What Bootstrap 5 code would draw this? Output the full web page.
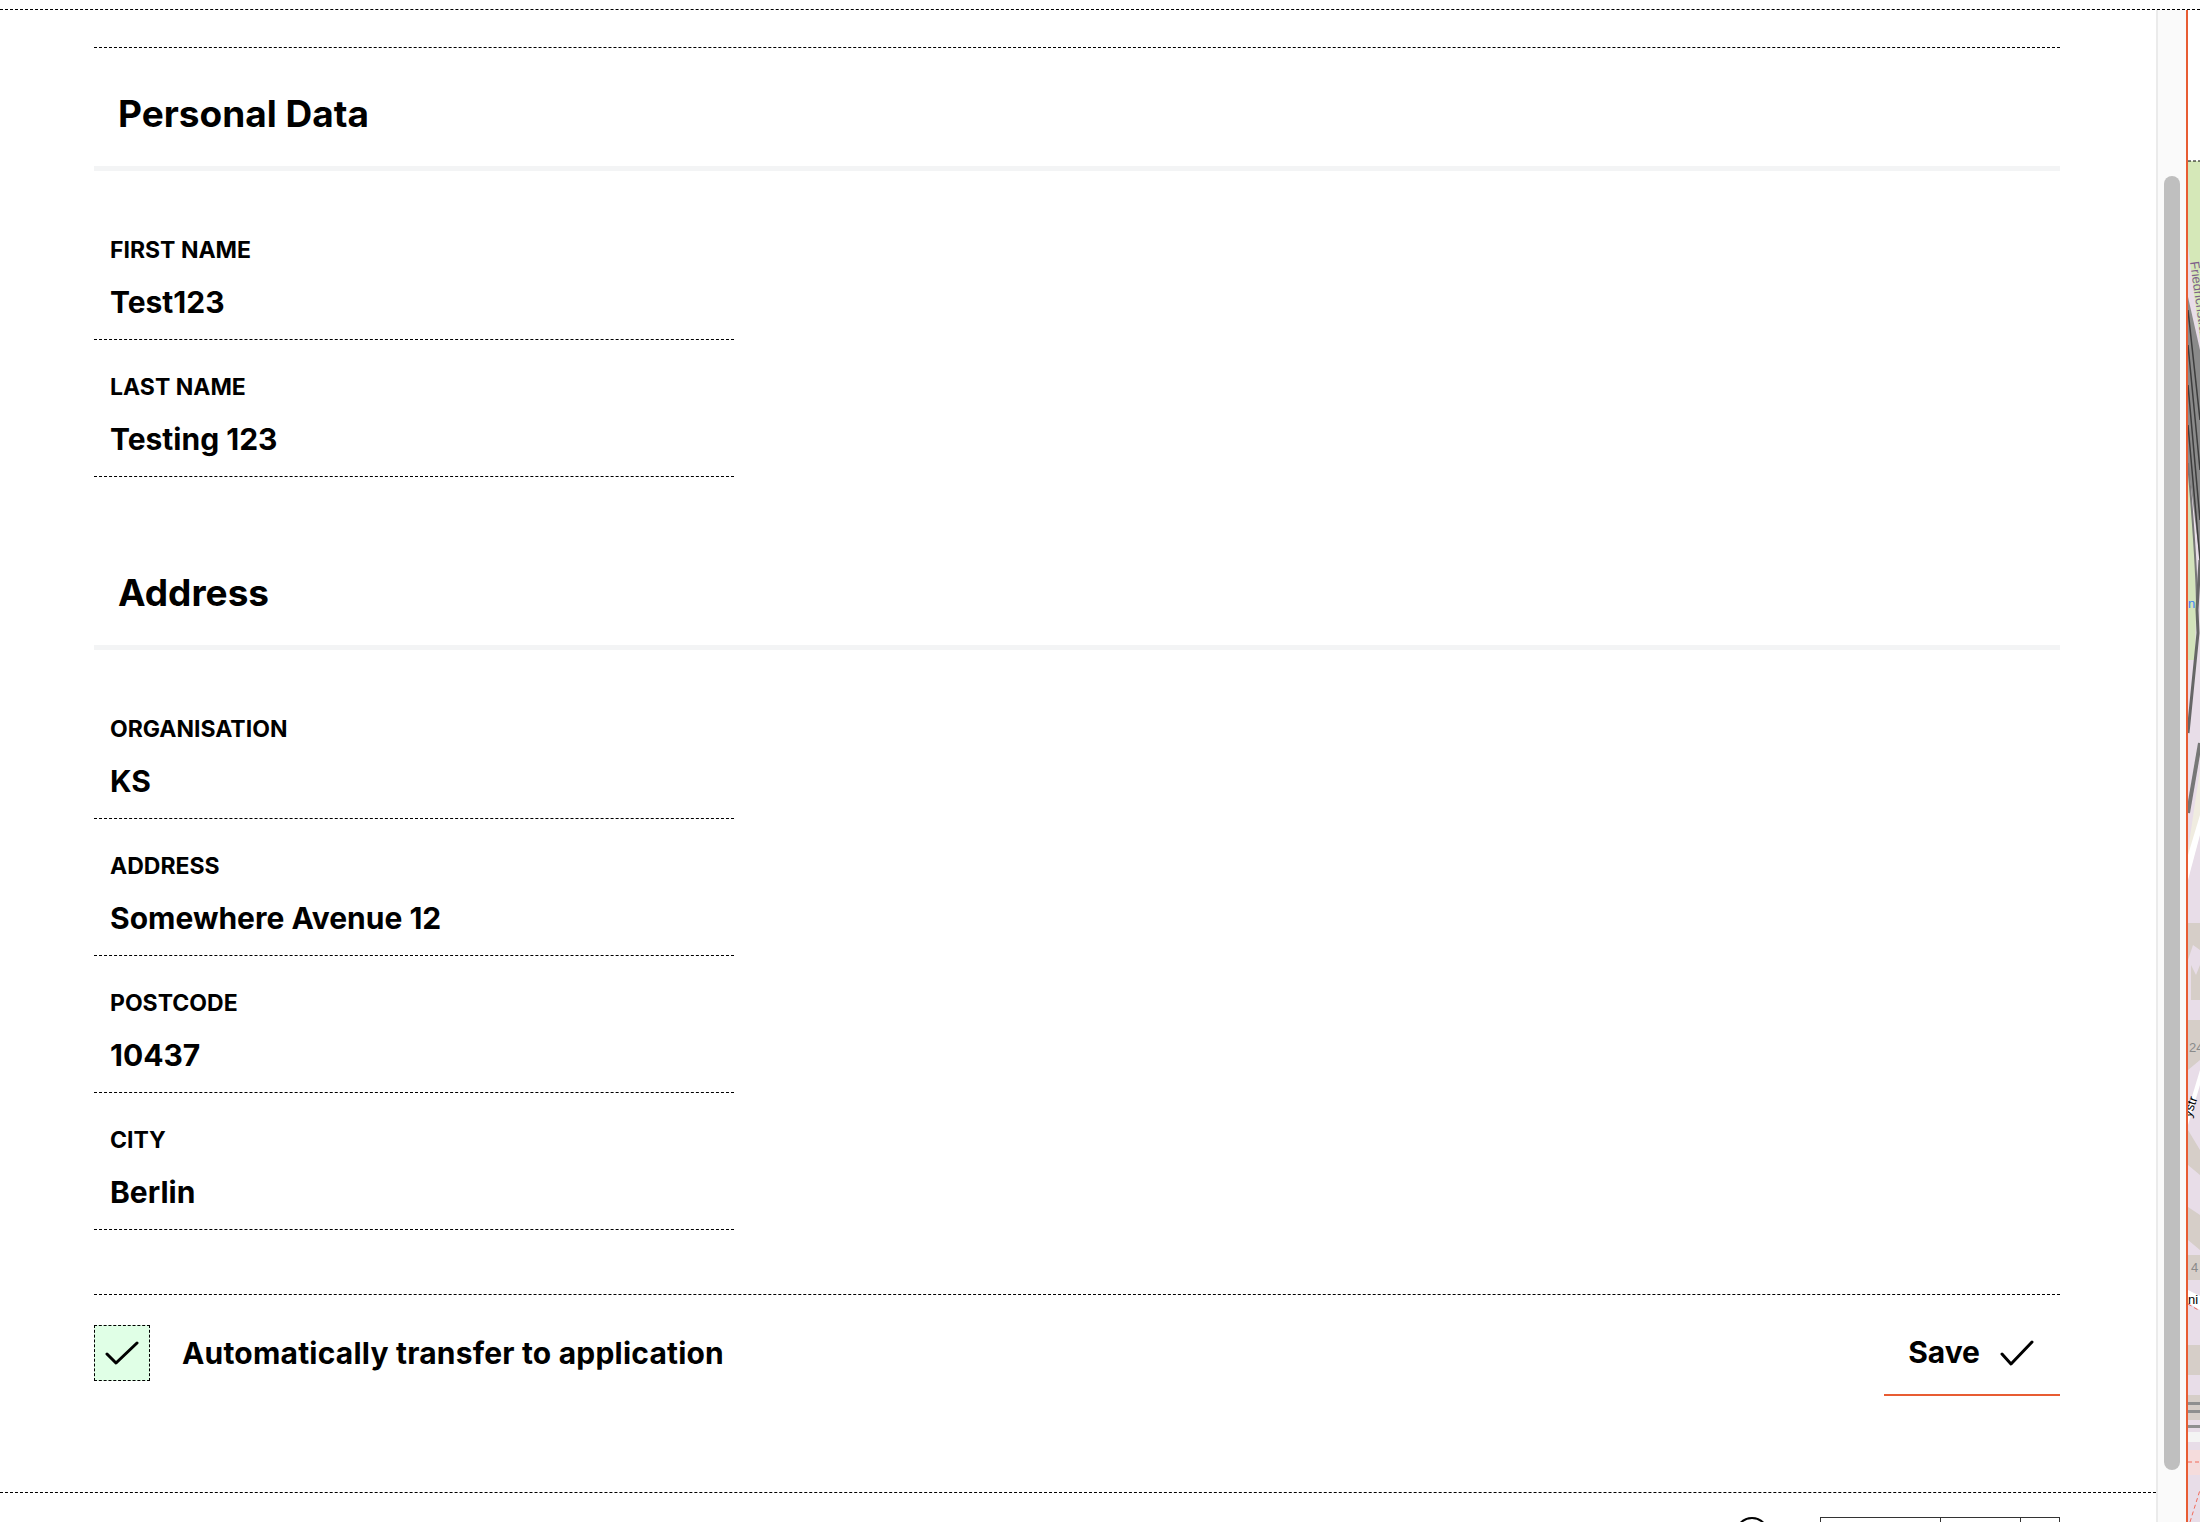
<!DOCTYPE html>
<html lang="en">
<head>
    <meta charset="UTF-8">
    <title>Personal Data</title>
    <link href="https://cdn.jsdelivr.net/npm/bootstrap@5.3.0/dist/css/bootstrap.min.css" rel="stylesheet">
    <style>
        html, body { height: 100%; overflow: hidden; }
        body { font-family: "Inter", "Liberation Sans", sans-serif; color: #000; background: #fff; }

        .top-strip { height: 10px; border-bottom: 1px dashed #000; }
        .page-row { height: 1512px; }
        .main-col { width: 2156px; }
        .scroll-body { height: 1483px; padding: 37px 96px 0 94px; border-bottom: 1px dashed #000; }
        .scroll-track { width: 30px; background: #fafafa; border-left: 2px solid #ebebeb; padding: 166px 6px 0 6px; }
        .scroll-thumb { height: 1294px; background: #bfbfbf; border-radius: 8px; }
        .map-strip { width: 14px; border-left: 2px solid #e85c33; }
        .map-label { font-family: "Liberation Sans", sans-serif; font-size: 13px; }

        .form-top { border-top: 1px dashed #000; }
        .section-head { height: 123px; padding: 14px 24px 0; margin: 0; font-size: 37px; font-weight: 700; border-bottom: 5px solid #f3f4f5; }
        .field-list { width: 640px; padding-top: 32px; }
        .field-item { height: 137px; padding: 0 16px; border-bottom: 1px dashed #000; }
        .field-label { font-size: 23px; font-weight: 700; line-height: 30px; padding-top: 32px; }
        .field-value { font-size: 30px; font-weight: 700; line-height: 40px; padding-top: 17px; }
        .section-gap { height: 50px; }

        .form-foot { margin-top: 64px; border-top: 1px dashed #000; padding-top: 30px; }
        .check-box { width: 56px; height: 56px; background: #e0ffe6; border: 1px dashed #000; }
        .check-label { font-size: 30px; font-weight: 700; letter-spacing: .2px; margin-left: 32px; }
        .save-btn { width: 176px; height: 71px; padding: 0 26px 14px 0; gap: 20px; font-size: 30px; font-weight: 700; color: #000; border: 0; border-bottom: 2px solid #e85c33; border-radius: 0; }
        .save-btn:hover { color: #000; border-bottom: 2px solid #e85c33; }

        .bottom-strip { padding-top: 24px; padding-right: 96px; }
        .zoom-dot { width: 34px; height: 34px; border: 2px solid #000; border-radius: 50%; margin-right: 51px; }
        .tool-cell { height: 30px; border: 1px solid #333; border-right: 0; }
        .tool-cell:last-child { border-right: 1px solid #333; }
    </style>
</head>
<body>
    <div class="top-strip"></div>
    <div class="page-row d-flex">
        <div class="main-col flex-shrink-0">
            <div class="scroll-body overflow-hidden">
                <div class="form-top">
                    <h2 class="section-head d-flex align-items-center">Personal Data</h2>
                    <div class="field-list">
                        <div class="field-item">
                            <div class="field-label">FIRST NAME</div>
                            <div class="field-value">Test123</div>
                        </div>
                        <div class="field-item">
                            <div class="field-label">LAST NAME</div>
                            <div class="field-value">Testing 123</div>
                        </div>
                    </div>
                    <div class="section-gap"></div>
                    <h2 class="section-head d-flex align-items-center">Address</h2>
                    <div class="field-list">
                        <div class="field-item">
                            <div class="field-label">ORGANISATION</div>
                            <div class="field-value">KS</div>
                        </div>
                        <div class="field-item">
                            <div class="field-label">ADDRESS</div>
                            <div class="field-value">Somewhere Avenue 12</div>
                        </div>
                        <div class="field-item">
                            <div class="field-label">POSTCODE</div>
                            <div class="field-value">10437</div>
                        </div>
                        <div class="field-item">
                            <div class="field-label">CITY</div>
                            <div class="field-value">Berlin</div>
                        </div>
                    </div>
                </div>
                <div class="form-foot d-flex justify-content-between align-items-start">
                    <div class="d-flex align-items-center">
                        <div class="check-box d-flex align-items-center justify-content-center">
                            <svg width="34" height="24" viewBox="0 0 34 24" fill="none" stroke="#000" stroke-width="3" stroke-linecap="round" stroke-linejoin="round"><path d="M2 13l9 9L32 2"/></svg>
                        </div>
                        <span class="check-label">Automatically transfer to application</span>
                    </div>
                    <button type="button" class="btn save-btn d-flex align-items-center justify-content-end">
                        <span>Save</span>
                        <svg width="34" height="26" viewBox="0 0 34 26" fill="none" stroke="#000" stroke-width="3" stroke-linecap="round" stroke-linejoin="round"><path d="M2 14l9 10L32 2"/></svg>
                    </button>
                </div>
            </div>
            <div class="bottom-strip d-flex justify-content-end align-items-start">
                <div class="zoom-dot"></div>
                <div class="d-flex">
                    <div class="tool-cell" style="width:120px"></div>
                    <div class="tool-cell" style="width:80px"></div>
                    <div class="tool-cell" style="width:40px"></div>
                </div>
            </div>
        </div>
        <div class="scroll-track flex-shrink-0">
            <div class="scroll-thumb"></div>
        </div>
        <div class="map-strip flex-shrink-0">
            <!-- slice of the map, y values are page pixels -->
            <svg class="d-block" width="12" height="1512" viewBox="0 10 12 1512" xmlns="http://www.w3.org/2000/svg">
                <rect y="161" width="12" height="1361" fill="#e8dde8"/>
                <path d="M0 161H12V340L0 245Z" fill="#d5e8b8"/>
                <path d="M0 161H12" stroke="#000" stroke-dasharray="3 2"/>
                <path d="M0 460L7 540L8 610L7 660H0Z" fill="#d3e3bb"/>
                <!-- rail tracks -->
                <path d="M0 297L12 350V560L0 463Z" fill="#8a8a8a"/>
                <path d="M0 310L12 420M0 345L12 470M0 385L12 520M0 425L12 560" stroke="#3d3d3d" stroke-width="1.5" fill="none"/>
                <path d="M0 463C5 520 9 570 9 610" stroke="#777" stroke-width="2" fill="none"/>
                <path d="M12 560L9 610L10 633L0 733" stroke="#666" stroke-width="3" fill="none"/>
                <path d="M12 743L0 813" stroke="#777" stroke-width="4" fill="none"/>
                <path d="M12 770L0 850V870L12 830Z" fill="#f0ece0"/>
                <path d="M12 815L0 855V880L12 835Z" fill="#fff"/>
                <!-- buildings -->
                <path d="M0 923H12V950L5 945L0 960ZM3 965L8 975L12 965V1000L3 1000ZM0 1020H12V1060L0 1070Z" fill="#d6cec8"/>
                <path d="M12 1070L0 1110V1125L12 1085Z" fill="#fff"/>
                <path d="M0 1130L12 1150V1175L0 1165ZM0 1207L12 1215V1250L0 1240ZM0 1255H12V1280H0Z" fill="#d6cec8"/>
                <path d="M0 1290L12 1296V1310L0 1303Z" fill="#fff"/>
                <path d="M0 1304L12 1311" stroke="#f26a5a" stroke-dasharray="4 3" fill="none"/>
                <path d="M0 1345H12V1375H0ZM0 1395h12v25H0Z" fill="#d6cec8"/>
                <path d="M0 1402h12v3H0ZM0 1410h12v3H0ZM0 1425h12v3H0Z" fill="#8f8f8f"/>
                <path d="M0 1432h12v10H0Z" fill="#f4f4f4"/>
                <path d="M0 1450h12v25H0Z" fill="#f5dcdc"/>
                <path d="M0 1462h12" stroke="#f26a5a" stroke-dasharray="4 3" fill="none"/>
                <path d="M2 1522L12 1490" stroke="#f26a5a" stroke-dasharray="4 3" fill="none"/>
                <!-- map labels -->
                <text class="map-label" fill="#7d5f8a" transform="translate(2 262) rotate(82)">Friedrichstraße</text>
                <text class="map-label" fill="#3b82f6" x="0" y="608">n</text>
                <text class="map-label" fill="#8a8a8a" x="1" y="1052">24</text>
                <text class="map-label" fill="#000" transform="translate(3 1118) rotate(-72)">ystr</text>
                <text class="map-label" fill="#8a8a8a" x="3" y="1272">4</text>
                <text class="map-label" fill="#000" x="0" y="1304">ni</text>
            </svg>
        </div>
    </div>
    <script src="https://cdn.jsdelivr.net/npm/bootstrap@5.3.0/dist/js/bootstrap.bundle.min.js"></script>
</body>
</html>
